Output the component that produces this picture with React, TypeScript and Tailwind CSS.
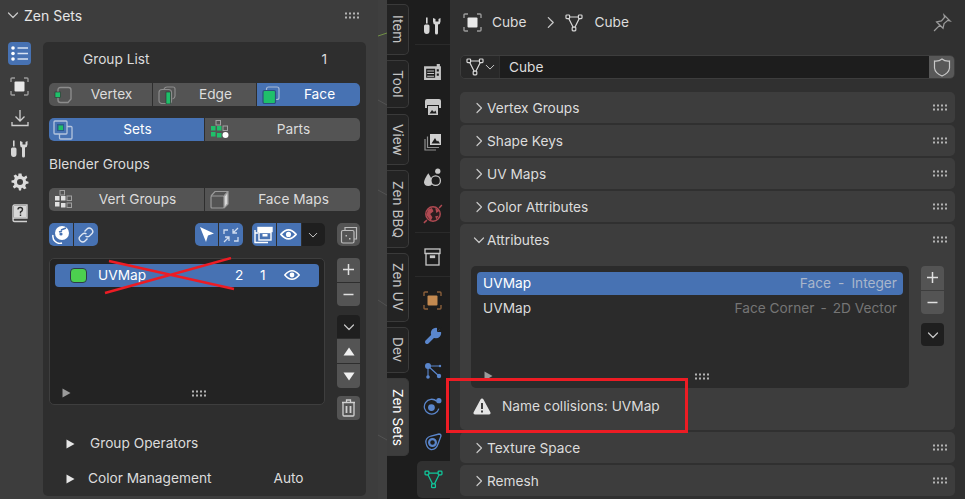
import type { ReactNode } from "react";

const GREEN = "#1fbf6a";

function Grip({ className = "" }: { className?: string }) {
  return (
    <svg width="15" height="7" viewBox="0 0 15 7" className={className}>
      {[0, 1].map((r) =>
        [0, 1, 2, 3].map((c) => <rect key={`${r}${c}`} x={c * 4 + 1} y={r * 4 + 0.5} width="2" height="2" fill="#b4b4b4" />)
      )}
    </svg>
  );
}

function Chevron({ open = false, size = 12 }: { open?: boolean; size?: number }) {
  return (
    <svg width={size} height={size} viewBox="0 0 12 12" fill="none" stroke="#c8c8c8" strokeWidth="1.2" strokeLinecap="round" strokeLinejoin="round">
      {open ? <path d="M1.5 4 L6 8.5 L10.5 4" /> : <path d="M4 1.5 L8.5 6 L4 10.5" />}
    </svg>
  );
}

function Tri({ color = "#e6e6e6" }: { color?: string }) {
  return (
    <svg width="9" height="10" viewBox="0 0 9 10">
      <path d="M0.5 0.5 L8.5 5 L0.5 9.5 Z" fill={color} />
    </svg>
  );
}

function ObjectIcon({ color = "#e8e8e8", corner = "#9a9a9a" }: { color?: string; corner?: string }) {
  return (
    <svg width="19" height="19" viewBox="0 0 19 19" fill="none">
      <path d="M1 5 V2 Q1 1 2 1 H5 M14 1 H17 Q18 1 18 2 V5 M18 14 V17 Q18 18 17 18 H14 M5 18 H2 Q1 18 1 17 V14" stroke={corner} strokeWidth="1.4" />
      <rect x="4.5" y="4.5" width="10" height="10" rx="1" fill={color} />
    </svg>
  );
}

function MeshIcon({ color = "#d8d8d8", size = 18, bg = "#303030" }: { color?: string; size?: number; bg?: string }) {
  return (
    <svg width={size} height={size} viewBox="0 0 18 18" fill="none" stroke={color} strokeWidth="1.2">
      <path d="M3 3 H15 L9 15 Z" />
      <rect x="1" y="1" width="3.6" height="3.6" rx="0.8" fill={bg} />
      <rect x="13.4" y="1" width="3.6" height="3.6" rx="0.8" fill={bg} />
      <rect x="7.2" y="13.2" width="3.6" height="3.6" rx="0.8" fill={bg} />
    </svg>
  );
}

function ToolsIcon() {
  return (
    <svg width="19" height="18" viewBox="0 0 19 18" fill="#d6d6d6">
      <rect x="3" y="0.5" width="1.6" height="6" />
      <path d="M1 9 Q1 7.5 2.5 7.5 H5 Q6.5 7.5 6.5 9 V14 Q6.5 17 3.7 17 Q1 17 1 14 Z" />
      <path d="M10 1 V4.5 Q10 7 12 7.5 V16 Q12 17.5 13.5 17.5 Q15 17.5 15 16 V7.5 Q17.5 7 17.5 4.5 V1 L15.5 2 V4.5 H12.5 V2 Z" />
    </svg>
  );
}

function Btn({ children, active = false, icon, className = "" }: { children?: ReactNode; active?: boolean; icon?: ReactNode; className?: string }) {
  return (
    <div className={`relative flex h-[23px] flex-1 items-center justify-center pb-[1px] pl-[22px] text-[13.7px] ${active ? "bg-[#4772b3] text-white" : "bg-[#545454] text-[#dcdcdc]"} ${className}`}>
      {icon && <span className="absolute left-[4px] top-[2px] flex h-[19px] w-[20px] items-center justify-center">{icon}</span>}
      {children}
    </div>
  );
}

function IconBtn({ children, active = true, dark = false, className = "" }: { children?: ReactNode; active?: boolean; dark?: boolean; className?: string }) {
  return (
    <div className={`flex h-[23px] w-[24px] items-center justify-center ${dark ? "bg-[#1f1f1f]" : active ? "bg-[#4772b3]" : "bg-[#545454]"} ${className}`}>
      {children}
    </div>
  );
}

function DotsGrid({ white = false }: { white?: boolean }) {
  return (
    <svg width="19" height="19" viewBox="0 0 19 19">
      <rect x="6" y="0.5" width="4.5" height="4.5" fill="none" stroke="#a0a0a0" />
      <rect x="1" y="6" width="4.5" height="4.5" fill={white ? GREEN : "#e0e0e0"} />
      <rect x="7" y="6" width="4.5" height="4.5" fill={white ? GREEN : "#e0e0e0"} />
      <rect x="13" y="6" width="4.5" height="4.5" fill="none" stroke="#a0a0a0" />
      <rect x="1" y="12" width="4.5" height="4.5" fill={white ? GREEN : "#e0e0e0"} />
      <rect x="7" y="13" width="4.5" height="4.5" fill={white ? GREEN : "#e0e0e0"} />
      {white ? <circle cx="15.5" cy="15" r="3" fill="#fff" /> : <rect x="13" y="13" width="4.5" height="4.5" fill="none" stroke="#a0a0a0" />}
    </svg>
  );
}

function Eye({ size = 16 }: { size?: number }) {
  return (
    <svg width={size} height={size * 0.75} viewBox="0 0 16 12" fill="none">
      <path d="M0.8 6 Q8 -2.5 15.2 6 Q8 14.5 0.8 6 Z" stroke="#fff" strokeWidth="1.5" />
      <circle cx="8" cy="6" r="2.4" fill="#fff" />
    </svg>
  );
}

function PlusMinus() {
  return (
    <div className="flex w-[23px] flex-col gap-px overflow-hidden rounded-[4px]">
      <div className="flex h-[23.5px] items-center justify-center bg-[#545454]">
        <svg width="13" height="13" viewBox="0 0 13 13" stroke="#e0e0e0" strokeWidth="1.5"><path d="M6.5 1 V12 M1 6.5 H12" /></svg>
      </div>
      <div className="flex h-[23.5px] items-center justify-center bg-[#545454]">
        <svg width="13" height="13" viewBox="0 0 13 13" stroke="#e0e0e0" strokeWidth="1.5"><path d="M1.5 6.5 H11.5" /></svg>
      </div>
    </div>
  );
}

function Panel({ label }: { label: string }) {
  return (
    <div className="flex h-[31px] items-center rounded-[5px] bg-[#3d3d3d] pl-[13px] pr-[8px] text-[13.7px] text-[#dcdcdc]">
      <Chevron />
      <span className="ml-[2px] flex-1 pt-[1px]">{label}</span>
      <Grip />
    </div>
  );
}

const tabs = [
  { label: "Item", h: 51, gap: 5 },
  { label: "Tool", h: 48, gap: 6 },
  { label: "View", h: 51, gap: 5 },
  { label: "Zen BBQ", h: 78, gap: 5 },
  { label: "Zen UV", h: 69, gap: 5 },
  { label: "Dev", h: 46, gap: 5 },
  { label: "Zen Sets", h: 78, gap: 0, active: true },
];

function SideIcons() {
  return (
    <div className="flex w-[43px] flex-col items-start pl-[8px]">
      <div className="flex h-[23px] w-[23px] items-center justify-center rounded-[4px] bg-[#4772b3]">
        <svg width="19" height="17" viewBox="0 0 19 17" fill="none">
          <circle cx="3" cy="3" r="1.8" fill="#fff" />
          <circle cx="3" cy="8.5" r="1.8" fill="#fff" />
          <circle cx="3" cy="14" r="1.8" fill="#fff" />
          <path d="M7.5 3 H18 M7.5 8.5 H18 M7.5 14 H18" stroke="#d8e2f2" strokeWidth="1.3" />
        </svg>
      </div>
      <div className="mt-[12px] flex h-[19px] w-[23px] items-center justify-center"><ObjectIcon /></div>
      <div className="mt-[12px] flex h-[19px] w-[23px] items-center justify-center">
        <svg width="18" height="18" viewBox="0 0 18 18" fill="none" stroke="#cfcfcf" strokeWidth="1.3">
          <path d="M9 1 V11.5 M4.5 7.5 L9 12 L13.5 7.5 M1 13 V16.5 H17 V13" />
        </svg>
      </div>
      <div className="mt-[12px] flex h-[19px] w-[23px] items-center justify-center"><ToolsIcon /></div>
      <div className="mt-[14px] flex h-[19px] w-[23px] items-center justify-center">
        <svg width="18" height="18" viewBox="0 0 18 18" fill="#dcdcdc">
          <path fillRule="evenodd" d="M7.5 0.5 H10.5 L11 3 L13 3.9 L15.2 2.5 L15.5 2.8 L16.3 4.8 L14.6 6.3 L15 8 L17.5 8.8 V10.5 L15 11 L14.2 13 L15.5 15.2 L13.2 16.2 L11.5 14.7 L10.5 15 L10 17.5 H8 L7.4 15 L5.4 14.2 L3.2 15.6 L1.8 13.5 L3.4 11.8 L3 10 L0.5 9.5 V7.5 L3 7 L3.8 5 L2.5 2.8 L4.8 1.6 L6.5 3.2 L7.2 3 Z M9 6 A3 3 0 1 0 9 12 A3 3 0 1 0 9 6 Z" />
        </svg>
      </div>
      <div className="mt-[13px] flex h-[19px] w-[23px] items-center justify-center">
        <svg width="18" height="19" viewBox="0 0 18 19" fill="none">
          <path d="M2 15 V2.5 Q2 1 3.5 1 H16 V14 H3.5 Q2 14 2 15.5 Q2 17.5 3.5 17.5 H16" stroke="#d0d0d0" strokeWidth="1.4" />
          <rect x="3" y="2" width="12.5" height="11.5" fill="#d8d8d8" />
          <path d="M7 5.5 Q7 3.5 9.2 3.5 Q11.5 3.5 11.5 5.5 Q11.5 7 9.5 8 V9.5 M9.5 10.5 V12" stroke="#303030" strokeWidth="1.4" />
        </svg>
      </div>
    </div>
  );
}

function ZenPanel() {
  return (
    <div className="flex h-[454px] w-[323px] flex-col rounded-[5px] bg-[#2e2e2e] px-[6px] text-[#dcdcdc]">
      <div className="flex h-[41px] items-center pb-[7px] pl-[34px] pr-[33px] text-[13.7px]">
        <span className="flex-1">Group List</span>
        <span>1</span>
      </div>
      <div className="flex gap-px overflow-hidden rounded-[5px]">
        <Btn icon={
          <svg width="18" height="18" viewBox="0 0 18 18" fill="none" stroke="#8c8c8c" strokeWidth="1.4">
            <path d="M4 4 Q4 1.5 6.5 1.5 H14.5 Q17 1.5 17 4 V13 L14 16.5 H6.5 Q4 16.5 4 14 Z" />
            <rect x="1" y="6" width="5.5" height="5.5" fill={GREEN} stroke="#2e2e2e" strokeWidth="0.6" />
          </svg>
        }>Vertex</Btn>
        <Btn icon={
          <svg width="18" height="18" viewBox="0 0 18 18" fill="none" stroke="#8c8c8c" strokeWidth="1.2">
            <path d="M6 3 Q7 1 9 1 H15 Q17 1 17 3 V10 Q17 12 14.5 13" />
            <rect x="1" y="3.5" width="12.5" height="14" rx="3" />
            <rect x="8" y="6" width="4.5" height="12" fill={GREEN} stroke="#2e2e2e" strokeWidth="0.6" />
          </svg>
        }>Edge</Btn>
        <Btn active icon={
          <svg width="18" height="18" viewBox="0 0 18 18" fill="none" stroke="#a7b9d6" strokeWidth="1.2">
            <rect x="4.5" y="1" width="12.5" height="12.5" rx="2" />
            <rect x="1" y="4.5" width="12.5" height="13" rx="1.5" fill={GREEN} stroke="#2d4f7c" />
          </svg>
        }>Face</Btn>
      </div>
      <div className="mt-[12px] flex gap-px overflow-hidden rounded-[5px]">
        <Btn active icon={
          <svg width="20" height="20" viewBox="0 0 20 20" fill="none" stroke="#b4c4dd" strokeWidth="1.3">
            <rect x="6.5" y="6.5" width="12.5" height="12.5" rx="1" />
            <rect x="1" y="1" width="13" height="13" rx="1" fill="#4772b3" />
            <rect x="4" y="4" width="7" height="7" fill="#2d5a8c" stroke="none" />
            <rect x="5.5" y="5.5" width="4.5" height="4.5" fill={GREEN} stroke="none" />
          </svg>
        }>Sets</Btn>
        <Btn icon={<DotsGrid white />}>Parts</Btn>
      </div>
      <div className="mt-[12px] flex h-[23px] items-center pb-[1px] text-[13.7px]">Blender Groups</div>
      <div className="mt-[12px] flex gap-px overflow-hidden rounded-[5px]">
        <Btn icon={<DotsGrid />}>Vert Groups</Btn>
        <Btn icon={
          <svg width="19" height="19" viewBox="0 0 19 19" fill="none" stroke="#9a9a9a" strokeWidth="1.2">
            <path d="M1 6 L5 1.5 H18 V14 L14 18 M14 6 L18 1.5" />
            <rect x="1" y="6" width="13" height="12" rx="1" />
            <path d="M14.5 6.5 L17.5 3 V13.5 L14.5 17 Z" fill="#d8d8d8" stroke="none" />
          </svg>
        }>Face Maps</Btn>
      </div>
      <div className="mt-[12px] flex items-center">
        <div className="flex gap-px overflow-hidden rounded-[5px]">
          <IconBtn>
            <svg width="19" height="19" viewBox="0 0 19 19" fill="none">
              <circle cx="11" cy="8" r="7" fill="#fff" />
              <path d="M10 5 L15 3 M8 7 L11 6" stroke="#4772b3" strokeWidth="1.4" />
              <circle cx="10" cy="9" r="1.6" fill="#4772b3" />
              <path d="M2 10 A7 7 0 0 0 11 18" stroke="#fff" strokeWidth="1.5" />
            </svg>
          </IconBtn>
          <IconBtn>
            <svg width="18" height="18" viewBox="0 0 18 18" fill="none" stroke="#dfe7f3" strokeWidth="1.4">
              <path d="M7.5 5.5 L10 3 Q12 1 14.5 3 Q17 5.5 15 7.5 L12.5 10 Q10.5 11.5 8.5 10" />
              <path d="M10.5 12.5 L8 15 Q6 17 3.5 15 Q1 12.5 3 10.5 L5.5 8 Q7.5 6.5 9.5 8" />
            </svg>
          </IconBtn>
        </div>
        <div className="ml-[97px] flex gap-px overflow-hidden rounded-[5px]">
          <IconBtn>
            <svg width="17" height="17" viewBox="0 0 17 17"><path d="M2 1 L16 7.5 L10 9.5 L8 16 Z" fill="#fff" /></svg>
          </IconBtn>
          <IconBtn>
            <svg width="18" height="18" viewBox="0 0 18 18" fill="none" stroke="#cfdcef" strokeWidth="1.3">
              <path d="M16 2 L11 7 M11 3 V7 H15 M2 16 L7 11 M3 11 H7 V15 M2 8 V4 H6 M16 11 V15 H12" />
            </svg>
          </IconBtn>
        </div>
        <div className="ml-[9px] flex gap-px overflow-hidden rounded-[5px]">
          <IconBtn>
            <svg width="19" height="18" viewBox="0 0 19 18" fill="none" stroke="#fff" strokeWidth="1.4">
              <rect x="4" y="1.5" width="14" height="4" fill="#fff" />
              <rect x="5" y="6.5" width="12" height="7.5" />
              <path d="M1 4 V16.5 H14 M1.5 7 H4" />
              <rect x="8.5" y="8" width="5" height="2.5" fill="#fff" stroke="none" />
            </svg>
          </IconBtn>
          <IconBtn><Eye size={17} /></IconBtn>
          <IconBtn dark><Chevron open size={10} /></IconBtn>
        </div>
        <div className="ml-[12px] flex h-[23px] w-[23px] items-center justify-center rounded-[5px] bg-[#545454]">
          <svg width="18" height="18" viewBox="0 0 18 18" fill="none" stroke="#bdbdbd" strokeWidth="1.2">
            <path d="M5 4 V1.5 H16.5 V13 H14" />
            <rect x="1.5" y="4.5" width="12.5" height="12.5" rx="1.5" />
            <rect x="5.5" y="9" width="1.5" height="1.5" fill="#bdbdbd" stroke="none" />
            <rect x="9" y="12" width="1.5" height="1.5" fill="#bdbdbd" stroke="none" />
          </svg>
        </div>
      </div>
      <div className="mt-[12px] flex gap-[12px]">
        <div className="flex h-[147px] w-[276px] flex-col rounded-[5px] border border-[#3e3e3e] bg-[#232323] p-[5px]">
          <div className="flex h-[23px] items-center rounded-[4px] bg-[#4772b3] pb-[1px] text-[13.7px] text-white">
            <span className="ml-[15px] h-[15px] w-[17px] rounded-[4px] border border-[#2d3a4a] bg-[#4cd04f]" />
            <span className="ml-[11px] flex-1">UVMap</span>
            <span className="w-[25px]">2</span>
            <span className="mr-[3px] w-[21px]">1</span>
            <span className="mr-[19px]"><Eye /></span>
          </div>
          <div className="mt-auto flex h-[12px] items-center">
            <span className="ml-[7px]"><Tri color="#9a9a9a" /></span>
            <Grip className="ml-[120px]" />
          </div>
        </div>
        <div className="flex flex-col">
          <PlusMinus />
          <div className="mt-[9px] flex w-[23px] flex-col gap-px overflow-hidden rounded-[4px]">
            <div className="flex h-[23px] items-center justify-center bg-[#1f1f1f]"><Chevron open /></div>
            <div className="flex h-[24px] items-center justify-center bg-[#545454]">
              <svg width="12" height="9" viewBox="0 0 12 9"><path d="M6 0.5 L11.5 8.5 H0.5 Z" fill="#f0f0f0" /></svg>
            </div>
            <div className="flex h-[24px] items-center justify-center bg-[#545454]">
              <svg width="12" height="9" viewBox="0 0 12 9"><path d="M6 8.5 L11.5 0.5 H0.5 Z" fill="#f0f0f0" /></svg>
            </div>
          </div>
          <div className="mt-[8px] flex h-[24px] items-center justify-center rounded-[4px] bg-[#545454]">
            <svg width="15" height="18" viewBox="0 0 15 18" fill="none" stroke="#d0d0d0" strokeWidth="1.3">
              <path d="M1 3.5 H14 M5.5 3.5 V1 H9.5 V3.5 M2 3.5 V16 Q2 17 3 17 H12 Q13 17 13 16 V3.5" />
              <path d="M5.5 7 V14 M9.5 7 V14" strokeWidth="1.8" />
            </svg>
          </div>
        </div>
      </div>
      <div className="mt-[12px] flex h-[23px] items-center text-[13.7px]">
        <span className="ml-[17px]"><Tri /></span>
        <span className="ml-[15px]">Group Operators</span>
      </div>
      <div className="mt-[12px] flex h-[23px] items-center text-[13.7px]">
        <span className="ml-[17px]"><Tri /></span>
        <span className="ml-[13px]">Color Management</span>
        <span className="ml-[62px]">Auto</span>
      </div>
    </div>
  );
}

function AttributesPanel() {
  return (
    <div className="flex h-[206px] flex-col rounded-[5px] bg-[#3d3d3d] text-[13.7px] text-[#dcdcdc]">
      <div className="flex h-[31px] items-center pl-[13px] pr-[8px]">
        <Chevron open />
        <span className="ml-[2px] flex-1 pt-[1px]">Attributes</span>
        <Grip />
      </div>
      <div className="mt-[11px] flex gap-[12px] pl-[11px]">
        <div className="flex h-[122px] w-[438px] flex-col rounded-[5px] bg-[#2b2b2b] p-[6px]">
          <div className="flex h-[23px] items-center justify-between rounded-[4px] bg-[#4772b3] px-[6px] pb-[1px]">
            <span className="text-white">UVMap</span>
            <span className="text-[#a9b6cb]">Face<span className="mx-[7px]">-</span>Integer</span>
          </div>
          <div className="mt-[2px] flex h-[23px] items-center justify-between px-[6px] pb-[1px]">
            <span>UVMap</span>
            <span className="text-[#757575]">Face Corner<span className="mx-[6px]">-</span>2D Vector</span>
          </div>
          <div className="mt-auto flex h-[12px] items-center">
            <span className="ml-[7px]"><Tri color="#9a9a9a" /></span>
            <Grip className="ml-[201px]" />
          </div>
        </div>
        <div className="flex flex-col">
          <PlusMinus />
          <div className="mt-[9px] flex h-[23px] w-[23px] items-center justify-center rounded-[4px] bg-[#1f1f1f]"><Chevron open /></div>
        </div>
      </div>
      <div className="flex flex-1 items-center pb-[5px] pl-[13px]">
        <svg width="18" height="17" viewBox="0 0 18 17">
          <path fillRule="evenodd" d="M9 0.5 Q10 0.5 10.5 1.5 L17.5 14.5 Q18 16.5 16 16.5 H2 Q0 16.5 0.5 14.5 L7.5 1.5 Q8 0.5 9 0.5 Z M8 5 V11 H10 V5 Z M8 12.5 V14.5 H10 V12.5 Z" fill="#e4e4e4" />
        </svg>
        <span className="ml-[11px]">Name collisions: UVMap</span>
      </div>
    </div>
  );
}

export default function App() {
  const strip: ReactNode[] = [
    <ToolsIcon key="tools" />,
    <svg key="render" width="19" height="18" viewBox="0 0 18 17">
      <path fillRule="evenodd" d="M1 3 H13 V1 H16 V3 H17 V16 H1 Z M3 5.5 V14 H11.5 V5.5 Z M13 6 V8 H15 V6 Z M13 10 V12 H15 V10 Z" fill="#c4c4c4" />
      <path d="M4 7.5 H10.5 M4 10 H10.5 M4 12.5 H10.5" stroke="#c4c4c4" />
    </svg>,
    <svg key="output" width="18" height="18" viewBox="0 0 18 18">
      <path d="M1 3 Q1 1 3 1 H15 Q17 1 17 3 V10 H15 V7 H3 V10 H1 Z" fill="#c8c8c8" />
      <path d="M4 8 H14 V17 H4 Z" fill="#c8c8c8" />
      <path d="M5.5 15.5 L8 12 L10 14 L11.5 12.5 L12.5 15.5 Z" fill="#1d1d1d" />
    </svg>,
    <svg key="view" width="18" height="18" viewBox="0 0 18 18" fill="none" stroke="#8f8f8f" strokeWidth="1.2">
      <path d="M1 6 V17 H12" />
      <path d="M3.5 3.5 V14.5 H15" />
      <rect x="6" y="1" width="11" height="11" fill="#d0d0d0" stroke="none" />
      <path d="M7.5 10.5 L11 5 L13 8.5 L14 7.5 L16 10.5 Z" fill="#1d1d1d" stroke="none" />
    </svg>,
    <svg key="scene" width="19" height="19" viewBox="0 0 18 18">
      <path d="M5 5 Q9 11 9 13.5 Q9 17 5 17 Q1 17 1 13.5 Q1 11 5 5 Z" fill="#c8c8c8" />
      <circle cx="14" cy="3" r="2.5" fill="#c8c8c8" />
      <circle cx="12" cy="12" r="4.5" fill="#1d1d1d" stroke="#c8c8c8" strokeWidth="1.2" />
    </svg>,
    <svg key="world" width="20" height="20" viewBox="0 0 18 18" fill="none">
      <circle cx="9" cy="9" r="6.5" stroke="#b04a52" strokeWidth="1.3" fill="#2a1d1f" />
      <path d="M4.5 5 L8 3.5 L9.5 6.5 L6.5 9 L8.5 12 L7 15 L3 10 Z M11 3.5 L15 6 L12 8 Z M11 11 L14 10.5 L12 14 Z" fill="#b04a52" />
      <path d="M0.8 17 L3.5 14.5 M14.5 3.5 L17 1" stroke="#b04a52" strokeWidth="1.3" />
    </svg>,
  ];
  const strip2: ReactNode[] = [
    <svg key="wrench" width="18" height="18" viewBox="0 0 18 18">
      <path d="M3 15 L10 8" stroke="#5a86cc" strokeWidth="4" strokeLinecap="round" />
      <circle cx="12" cy="6" r="5.2" fill="#5a86cc" />
      <path d="M13 5 L19 -1 L19 5 Z" fill="#1d1d1d" />
      <path d="M13 5 L13 -1 L19 -1 Z" fill="#1d1d1d" />
    </svg>,
    <svg key="particles" width="18" height="18" viewBox="0 0 18 18" fill="#5a86cc">
      <circle cx="4" cy="4" r="3" />
      <circle cx="4" cy="15" r="1.8" />
      <circle cx="15" cy="14" r="2.2" />
      <circle cx="16" cy="4" r="1.2" />
      <path d="M4 4 V15 M4 4 L15 14 M4 4 H16" stroke="#5a86cc" strokeWidth="1.1" />
    </svg>,
    <svg key="physics" width="19" height="19" viewBox="0 0 18 18" fill="none">
      <path d="M13 4 A7 7 0 1 0 15 11" stroke="#5a86cc" strokeWidth="1.2" />
      <circle cx="8" cy="10" r="3.2" fill="#5a86cc" />
      <circle cx="15" cy="3.5" r="2.5" fill="#5a86cc" />
    </svg>,
    <svg key="constraint" width="18" height="18" viewBox="0 0 18 18" fill="none" stroke="#5a86cc" strokeWidth="1.3">
      <path d="M2 10 Q1 5 7 3 L15 1 Q17 1 17 3 L14 11 Q12 17 7 16.5 Q3 15.5 2 10 Z" />
      <circle cx="8.5" cy="9.5" r="3.4" strokeWidth="2.2" />
    </svg>,
    <MeshIcon key="data" color="#10c79b" size={19} />,
  ];
  return (
    <div className="relative flex h-[499px] w-[965px] overflow-hidden bg-[#303030] font-['Inter',sans-serif]">
      <div className="flex w-[378px] flex-col bg-[#3d3d3d]">
        <div className="flex h-[42px] items-center pb-[12px] pl-[7px] pr-[19px] text-[#e6e6e6]">
          <Chevron open />
          <span className="ml-[5px] flex-1 text-[14px]">Zen Sets</span>
          <Grip />
        </div>
        <div className="flex">
          <SideIcons />
          <ZenPanel />
        </div>
      </div>

      <div className="w-[9px] bg-[#3f3f3f]">
        <svg width="9" height="499" viewBox="0 0 9 499" fill="none" stroke="#525252">
          <path d="M0 36 L9 33" stroke="#6f8f45" />
          <path d="M0 100 L9 105 M0 190 L9 195 M0 300 L9 306 M0 435 L9 440" />
        </svg>
      </div>

      <div className="flex w-[28px] flex-col bg-[#1d1d1d] pt-[4px]">
        {tabs.map((t) => (
          <div
            key={t.label}
            style={{ height: t.h, marginBottom: t.gap }}
            className={`flex w-[22px] items-center justify-center rounded-r-[5px] border border-l-0 border-[#3a3a3a] text-[13.7px] [writing-mode:vertical-rl] ${t.active ? "bg-[#3d3d3d] text-white" : "bg-[#232323] text-[#c4c4c4]"}`}
          >
            {t.label}
          </div>
        ))}
      </div>

      <div className="flex w-[35px] flex-col items-center bg-[#1d1d1d]">
        <div className="flex h-[45px] w-full items-center justify-center border-b border-[#2a2a2a] pt-[8px]">{strip[0]}</div>
        <div className="mt-[18px] flex flex-col items-center gap-[17px]">{strip.slice(1)}</div>
        <div className="mt-[8px] w-full border-t border-[#2a2a2a]" />
        <div className="mt-[15px] flex h-[18px] items-center">
          <svg width="17" height="18" viewBox="0 0 17 18" fill="none" stroke="#c8c8c8" strokeWidth="1.3">
            <rect x="1" y="1" width="15" height="4.5" />
            <rect x="2" y="5.5" width="13" height="11.5" />
            <rect x="6.5" y="8" width="4" height="1.5" fill="#c8c8c8" />
          </svg>
        </div>
        <div className="mt-[10px] w-full border-t border-[#2a2a2a]" />
        <div className="mt-[14px] flex h-[19px] items-center"><ObjectIcon color="#c48a50" corner="#8a5f3a" /></div>
        <div className="mt-[17px] flex flex-col items-center gap-[17px]">{strip2.slice(0, 4)}</div>
        <div className="ml-[2px] mt-[10px] flex h-[37px] w-[33px] items-center justify-center self-end rounded-l-[5px] bg-[#303030]">{strip2[4]}</div>
      </div>

      <div className="flex w-[515px] flex-col px-[10px] text-[#dcdcdc]">
        <div className="flex h-[45px] items-center px-[3px] text-[13.7px]">
          <ObjectIcon />
          <span className="ml-[10px]">Cube</span>
          <span className="ml-[18px]"><Chevron size={13} /></span>
          <span className="ml-[8px]"><MeshIcon /></span>
          <span className="ml-[11px] flex-1">Cube</span>
          <svg width="19" height="19" viewBox="0 0 18 18" fill="none" stroke="#9a9a9a" strokeWidth="1.2">
            <path d="M1 17 L6.5 11.5 M3.5 8.5 L9.5 14.5 L10.5 10 L14 7 L16 7.5 L10.5 2 L11 4 L8 7.5 Z" />
          </svg>
        </div>
        <div className="mt-[10px] flex h-[24px] overflow-hidden rounded-[5px] border border-[#3d3d3d] text-[13.7px]">
          <div className="flex w-[38px] items-center justify-center gap-[1px] bg-[#282828]">
            <MeshIcon size={18} bg="#282828" />
            <Chevron open size={10} />
          </div>
          <div className="ml-px flex flex-1 items-center bg-[#1d1d1d] pl-[9px]">Cube</div>
          <div className="flex w-[25px] items-center justify-center bg-[#585858]">
            <svg width="18" height="19" viewBox="0 0 18 19" fill="none" stroke="#c8c8c8" strokeWidth="1.2">
              <path d="M1.5 3 Q6 3.5 9 1 Q12 3.5 16.5 3 V10 Q16 15 9 18 Q2 15 1.5 10 Z" />
            </svg>
          </div>
        </div>
        <div className="mt-[13px] flex flex-col gap-[2px]">
          <Panel label="Vertex Groups" />
          <Panel label="Shape Keys" />
          <Panel label="UV Maps" />
          <Panel label="Color Attributes" />
          <AttributesPanel />
          <Panel label="Texture Space" />
          <Panel label="Remesh" />
        </div>
      </div>

      <svg className="absolute left-[100px] top-[257px]" width="140" height="40" viewBox="0 0 140 40" fill="none" stroke="#ed1c24" strokeWidth="2.4">
        <path d="M9 4 L134 32 M131 1 L5 36" />
      </svg>
      <div className="absolute left-[446px] top-[378px] h-[55px] w-[242px] border-[3px] border-[#ed1c24]" />
    </div>
  );
}
